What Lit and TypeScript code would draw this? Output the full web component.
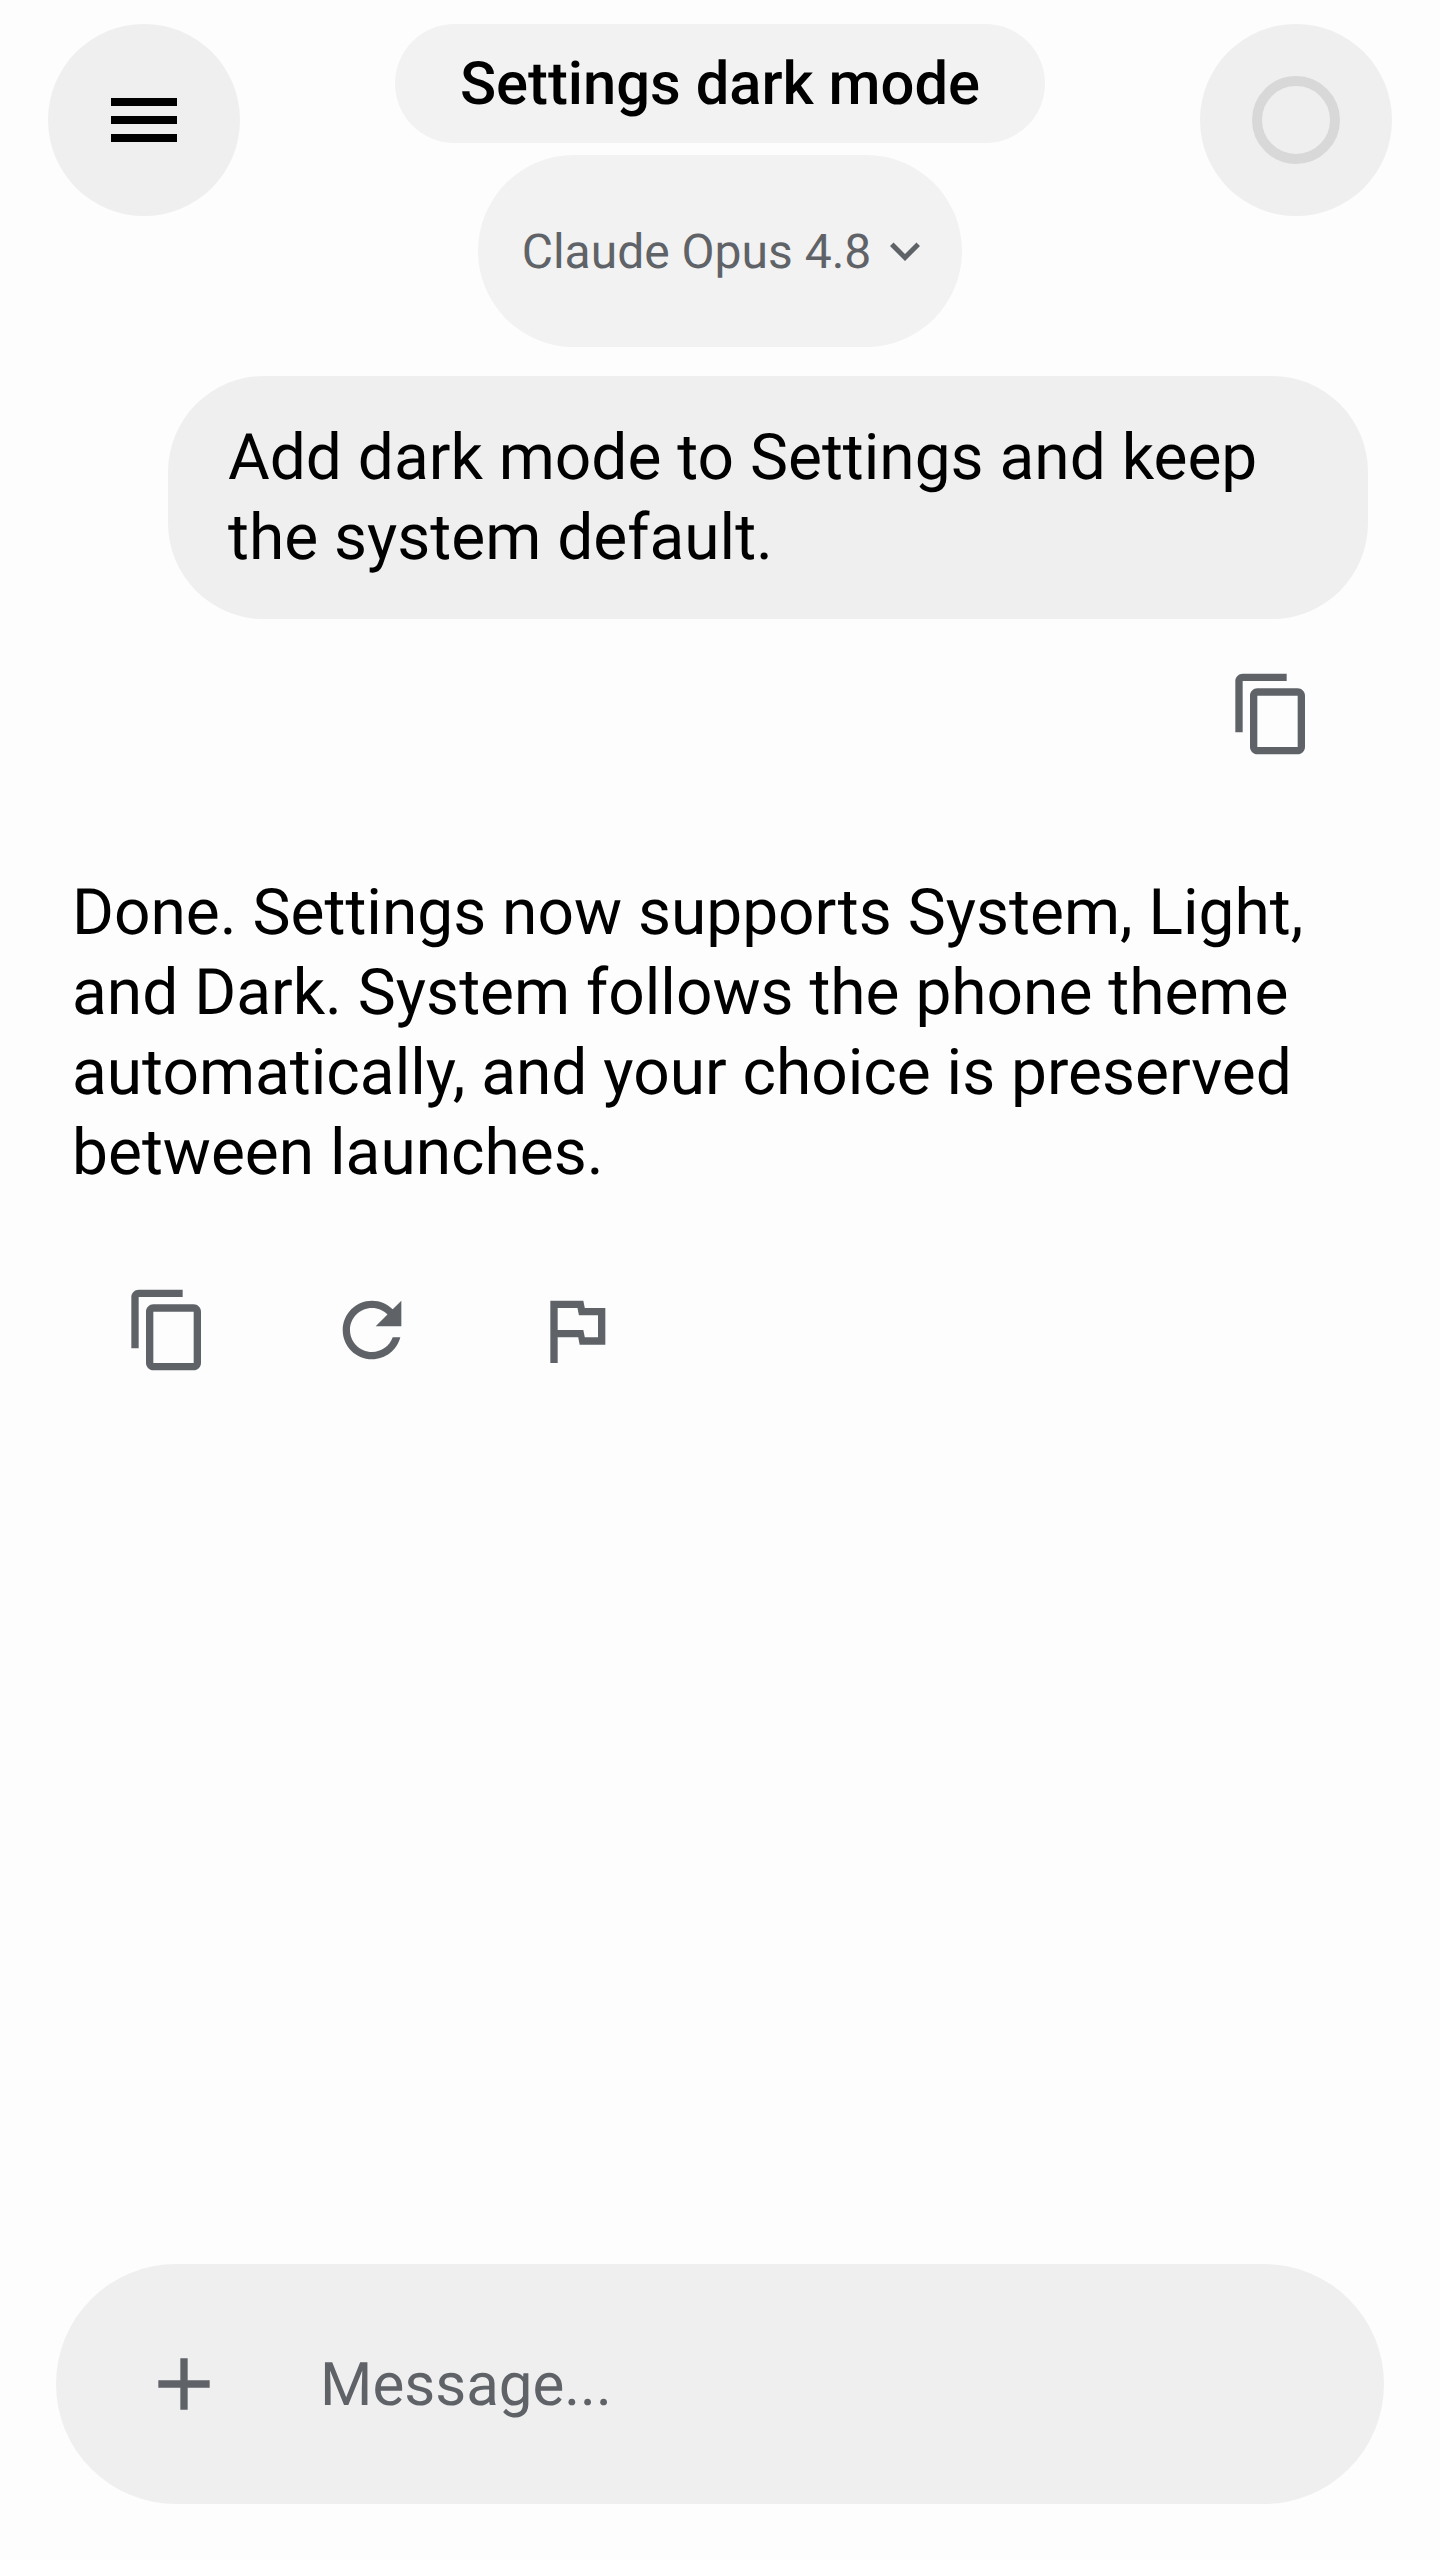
import { LitElement, html, css } from "lit";
import { customElement } from "lit/decorators.js";

const COPY = "M16 1H4c-1.1 0-2 .9-2 2v14h2V3h12V1zm3 4H8c-1.1 0-2 .9-2 2v14c0 1.1.9 2 2 2h11c1.1 0 2-.9 2-2V7c0-1.1-.9-2-2-2zm0 16H8V7h11v14z";
const REFRESH = "M17.65 6.35C16.2 4.9 14.21 4 12 4c-4.42 0-7.99 3.58-7.99 8s3.57 8 7.99 8c3.73 0 6.84-2.55 7.73-6h-2.08c-.82 2.33-3.04 4-5.65 4-3.31 0-6-2.69-6-6s2.69-6 6-6c1.66 0 3.14.69 4.22 1.78L13 11h7V4l-2.35 2.35z";
const FLAG = "M14.4 6L14 4H5v17h2v-7h5.6l.4 2h7V6h-5.6zM18 14h-3.6l-.4-2H7V6h5.4l.4 2H18v6z";
const CHEVRON = "M16.59 8.59L12 13.17 7.41 8.59 6 10l6 6 6-6z";
const PLUS = "M19 13h-6v6h-2v-6H5v-2h6V5h2v6h6v2z";

const icon = (d: string, cls = "icon") =>
  html`<svg class=${cls} viewBox="0 0 24 24" aria-hidden="true"><path d=${d}></path></svg>`;

@customElement("app-root")
export class AppRoot extends LitElement {
  static styles = css`
    :host {
      display: flex;
      flex-direction: column;
      min-height: 2560px;
      background: #fdfdfd;
      font-family: Roboto, sans-serif;
      color: #000;
      text-rendering: geometricPrecision;
    }
    .header {
      display: flex;
      justify-content: space-between;
      align-items: flex-start;
      padding: 24px 48px 0;
    }
    .round {
      flex: none;
      width: 192px;
      height: 192px;
      border-radius: 50%;
      background: #efefef;
      display: flex;
      align-items: center;
      justify-content: center;
    }
    .burger {
      display: flex;
      flex-direction: column;
      gap: 10px;
      width: 66px;
    }
    .burger span {
      height: 8px;
      background: #000;
    }
    .ring {
      width: 88px;
      height: 88px;
      box-sizing: border-box;
      border: 10px solid #d8d8d8;
      border-radius: 50%;
    }
    .center {
      display: flex;
      flex-direction: column;
      align-items: center;
      gap: 12px;
    }
    .title {
      height: 119px;
      padding: 0 65px;
      border-radius: 60px;
      background: #f2f2f2;
      display: flex;
      align-items: center;
      font-size: 59.7px;
      font-weight: 500;
    }
    .model {
      height: 192px;
      border-radius: 96px;
      background: #f2f2f2;
      padding: 0 27px 0 44px;
      display: flex;
      align-items: center;
      gap: 4px;
      font-size: 48px;
      color: #5f6368;
    }
    .chev {
      width: 60px;
      height: 60px;
      fill: #5f6368;
    }
    .main {
      flex: 1;
      display: flex;
      flex-direction: column;
    }
    .bubble {
      align-self: flex-end;
      box-sizing: border-box;
      width: 1200px;
      margin: 29px 72px 0 0;
      padding: 42px 60px 41px;
      border-radius: 96px;
      background: #efefef;
      font-size: 64px;
      line-height: 80px;
    }
    .user-actions {
      display: flex;
      justify-content: flex-end;
      padding: 51px 124px 0 0;
    }
    .icon {
      display: block;
      width: 88px;
      height: 88px;
      fill: #5f6368;
    }
    .reply {
      margin: 115px 72px 0;
      font-size: 64px;
      line-height: 80px;
    }
    .reply-actions {
      display: flex;
      gap: 116px;
      padding: 93px 0 0 124px;
    }
    .composer {
      flex: none;
      height: 240px;
      margin: 0 56px 56px;
      border-radius: 120px;
      background: #efefef;
      display: flex;
      align-items: center;
      padding-left: 84px;
      gap: 92px;
      font-size: 60px;
      color: #5f6368;
    }
  `;

  render() {
    return html`
      <div class="header">
        <div class="round">
          <div class="burger"><span></span><span></span><span></span></div>
        </div>
        <div class="center">
          <div class="title">Settings dark mode</div>
          <div class="model">Claude Opus 4.8 ${icon(CHEVRON, "chev")}</div>
        </div>
        <div class="round"><div class="ring"></div></div>
      </div>
      <div class="main">
        <div class="bubble">Add dark mode to Settings and keep the system default.</div>
        <div class="user-actions">${icon(COPY)}</div>
        <div class="reply">
          Done. Settings now supports System, Light, and Dark. System follows the phone theme
          automatically, and your choice is preserved between launches.
        </div>
        <div class="reply-actions">${icon(COPY)} ${icon(REFRESH)} ${icon(FLAG)}</div>
      </div>
      <div class="composer">${icon(PLUS)}<span>Message...</span></div>
    `;
  }
}
